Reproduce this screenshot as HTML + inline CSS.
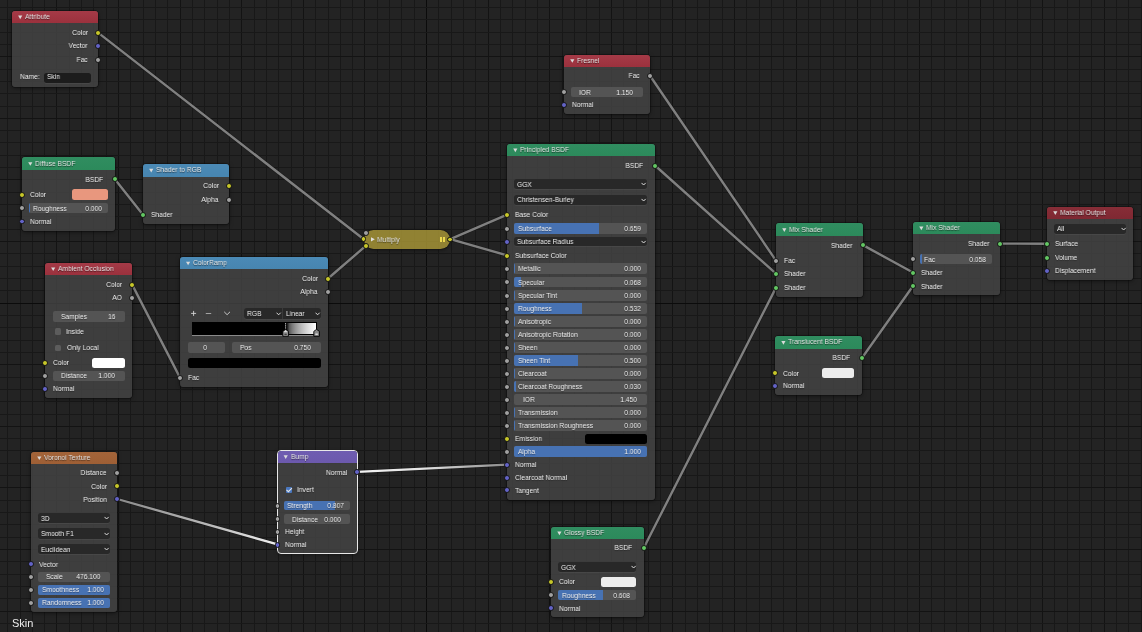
<!DOCTYPE html><html><head><meta charset="utf-8"><style>
html,body{margin:0;padding:0;}
body{width:1142px;height:632px;overflow:hidden;position:relative;background:#232323;font-family:"Liberation Sans",sans-serif;}
.layer{position:absolute;left:0;top:0;}
.node{position:absolute;background:rgba(71,71,71,0.78);border-radius:3px;overflow:hidden;box-shadow:0 0 0 0.6px rgba(10,10,10,0.7),0 1px 4px rgba(0,0,0,0.5);}
.hdr{position:absolute;left:0;top:0;right:0;}
.ht{position:absolute;font-size:7.6px;line-height:12px;color:#e4e4e4;white-space:nowrap;text-shadow:0 0.5px 1px rgba(0,0,0,0.6);}
.t{position:absolute;font-size:7.6px;line-height:12px;color:#efefef;white-space:nowrap;text-shadow:0 0.7px 1px rgba(0,0,0,0.4);}
.L{will-change:transform;transform:scaleX(0.88);transform-origin:0 50%;}
.R{will-change:transform;transform:scaleX(0.88);transform-origin:100% 50%;}
.C{will-change:transform;transform:scaleX(0.88);transform-origin:50% 50%;}
.tri{position:absolute;width:0;height:0;border-left:1.8px solid transparent;border-right:1.8px solid transparent;border-top:3.2px solid #d8d8d8;}
.tri2{position:absolute;width:0;height:0;border-top:1.6px solid transparent;border-bottom:1.6px solid transparent;border-left:2.8px solid #dcdcdc;}
.sk{position:absolute;width:3.9px;height:3.9px;border-radius:50%;border:0.55px solid #161616;}
.fld{position:absolute;background:#545454;border-radius:2px;overflow:hidden;}
.fill{position:absolute;left:0;top:0;bottom:0;background:#4772b3;}
.dd{position:absolute;background:#282828;border-radius:2.5px;box-shadow:0 0.8px 0 rgba(255,255,255,0.07);}
.chev{position:absolute;}
.sw{position:absolute;border-radius:2.5px;}
.cb{position:absolute;width:6.4px;height:6.4px;background:#5c5c5c;border-radius:1.5px;}
.cb.on{background:#4a78c0;border-radius:1px;}
.mul{position:absolute;background:rgba(163,146,53,0.86);border-radius:9.5px;box-shadow:0 0 0 0.8px #141414, 0 1px 4px rgba(0,0,0,0.5);}
</style></head><body><svg class="layer" width="1142" height="632"><rect x="7" y="0" width="1" height="632" fill="#181818"/><rect x="20" y="0" width="1" height="632" fill="#181818"/><rect x="32" y="0" width="1" height="632" fill="#181818"/><rect x="44" y="0" width="1" height="632" fill="#181818"/><rect x="56" y="0" width="1" height="632" fill="#131313"/><rect x="69" y="0" width="1" height="632" fill="#181818"/><rect x="81" y="0" width="1" height="632" fill="#181818"/><rect x="93" y="0" width="1" height="632" fill="#181818"/><rect x="106" y="0" width="1" height="632" fill="#181818"/><rect x="118" y="0" width="1" height="632" fill="#131313"/><rect x="130" y="0" width="1" height="632" fill="#181818"/><rect x="143" y="0" width="1" height="632" fill="#181818"/><rect x="155" y="0" width="1" height="632" fill="#181818"/><rect x="167" y="0" width="1" height="632" fill="#181818"/><rect x="180" y="0" width="1" height="632" fill="#131313"/><rect x="192" y="0" width="1" height="632" fill="#181818"/><rect x="204" y="0" width="1" height="632" fill="#181818"/><rect x="217" y="0" width="1" height="632" fill="#181818"/><rect x="229" y="0" width="1" height="632" fill="#181818"/><rect x="241" y="0" width="1" height="632" fill="#131313"/><rect x="254" y="0" width="1" height="632" fill="#181818"/><rect x="266" y="0" width="1" height="632" fill="#181818"/><rect x="278" y="0" width="1" height="632" fill="#181818"/><rect x="291" y="0" width="1" height="632" fill="#181818"/><rect x="303" y="0" width="1" height="632" fill="#131313"/><rect x="315" y="0" width="1" height="632" fill="#181818"/><rect x="328" y="0" width="1" height="632" fill="#181818"/><rect x="340" y="0" width="1" height="632" fill="#181818"/><rect x="352" y="0" width="1" height="632" fill="#181818"/><rect x="364" y="0" width="1" height="632" fill="#131313"/><rect x="377" y="0" width="1" height="632" fill="#181818"/><rect x="389" y="0" width="1" height="632" fill="#181818"/><rect x="401" y="0" width="1" height="632" fill="#181818"/><rect x="414" y="0" width="1" height="632" fill="#181818"/><rect x="426" y="0" width="1" height="632" fill="#0b0b0b"/><rect x="438" y="0" width="1" height="632" fill="#181818"/><rect x="451" y="0" width="1" height="632" fill="#181818"/><rect x="463" y="0" width="1" height="632" fill="#181818"/><rect x="475" y="0" width="1" height="632" fill="#181818"/><rect x="488" y="0" width="1" height="632" fill="#131313"/><rect x="500" y="0" width="1" height="632" fill="#181818"/><rect x="512" y="0" width="1" height="632" fill="#181818"/><rect x="525" y="0" width="1" height="632" fill="#181818"/><rect x="537" y="0" width="1" height="632" fill="#181818"/><rect x="549" y="0" width="1" height="632" fill="#131313"/><rect x="562" y="0" width="1" height="632" fill="#181818"/><rect x="574" y="0" width="1" height="632" fill="#181818"/><rect x="586" y="0" width="1" height="632" fill="#181818"/><rect x="599" y="0" width="1" height="632" fill="#181818"/><rect x="611" y="0" width="1" height="632" fill="#131313"/><rect x="623" y="0" width="1" height="632" fill="#181818"/><rect x="636" y="0" width="1" height="632" fill="#181818"/><rect x="648" y="0" width="1" height="632" fill="#181818"/><rect x="660" y="0" width="1" height="632" fill="#181818"/><rect x="672" y="0" width="1" height="632" fill="#131313"/><rect x="685" y="0" width="1" height="632" fill="#181818"/><rect x="697" y="0" width="1" height="632" fill="#181818"/><rect x="709" y="0" width="1" height="632" fill="#181818"/><rect x="722" y="0" width="1" height="632" fill="#181818"/><rect x="734" y="0" width="1" height="632" fill="#131313"/><rect x="746" y="0" width="1" height="632" fill="#181818"/><rect x="759" y="0" width="1" height="632" fill="#181818"/><rect x="771" y="0" width="1" height="632" fill="#181818"/><rect x="783" y="0" width="1" height="632" fill="#181818"/><rect x="796" y="0" width="1" height="632" fill="#131313"/><rect x="808" y="0" width="1" height="632" fill="#181818"/><rect x="820" y="0" width="1" height="632" fill="#181818"/><rect x="833" y="0" width="1" height="632" fill="#181818"/><rect x="845" y="0" width="1" height="632" fill="#181818"/><rect x="857" y="0" width="1" height="632" fill="#131313"/><rect x="870" y="0" width="1" height="632" fill="#181818"/><rect x="882" y="0" width="1" height="632" fill="#181818"/><rect x="894" y="0" width="1" height="632" fill="#181818"/><rect x="907" y="0" width="1" height="632" fill="#181818"/><rect x="919" y="0" width="1" height="632" fill="#131313"/><rect x="931" y="0" width="1" height="632" fill="#181818"/><rect x="944" y="0" width="1" height="632" fill="#181818"/><rect x="956" y="0" width="1" height="632" fill="#181818"/><rect x="968" y="0" width="1" height="632" fill="#181818"/><rect x="980" y="0" width="1" height="632" fill="#131313"/><rect x="993" y="0" width="1" height="632" fill="#181818"/><rect x="1005" y="0" width="1" height="632" fill="#181818"/><rect x="1017" y="0" width="1" height="632" fill="#181818"/><rect x="1030" y="0" width="1" height="632" fill="#181818"/><rect x="1042" y="0" width="1" height="632" fill="#131313"/><rect x="1054" y="0" width="1" height="632" fill="#181818"/><rect x="1067" y="0" width="1" height="632" fill="#181818"/><rect x="1079" y="0" width="1" height="632" fill="#181818"/><rect x="1091" y="0" width="1" height="632" fill="#181818"/><rect x="1104" y="0" width="1" height="632" fill="#131313"/><rect x="1116" y="0" width="1" height="632" fill="#181818"/><rect x="1128" y="0" width="1" height="632" fill="#181818"/><rect x="1141" y="0" width="1" height="632" fill="#181818"/><rect x="0" y="7" width="1142" height="1" fill="#181818"/><rect x="0" y="19" width="1142" height="1" fill="#181818"/><rect x="0" y="32" width="1142" height="1" fill="#181818"/><rect x="0" y="44" width="1142" height="1" fill="#181818"/><rect x="0" y="56" width="1142" height="1" fill="#131313"/><rect x="0" y="69" width="1142" height="1" fill="#181818"/><rect x="0" y="81" width="1142" height="1" fill="#181818"/><rect x="0" y="93" width="1142" height="1" fill="#181818"/><rect x="0" y="106" width="1142" height="1" fill="#181818"/><rect x="0" y="118" width="1142" height="1" fill="#131313"/><rect x="0" y="130" width="1142" height="1" fill="#181818"/><rect x="0" y="142" width="1142" height="1" fill="#181818"/><rect x="0" y="155" width="1142" height="1" fill="#181818"/><rect x="0" y="167" width="1142" height="1" fill="#181818"/><rect x="0" y="179" width="1142" height="1" fill="#131313"/><rect x="0" y="192" width="1142" height="1" fill="#181818"/><rect x="0" y="204" width="1142" height="1" fill="#181818"/><rect x="0" y="216" width="1142" height="1" fill="#181818"/><rect x="0" y="229" width="1142" height="1" fill="#181818"/><rect x="0" y="241" width="1142" height="1" fill="#131313"/><rect x="0" y="253" width="1142" height="1" fill="#181818"/><rect x="0" y="266" width="1142" height="1" fill="#181818"/><rect x="0" y="278" width="1142" height="1" fill="#181818"/><rect x="0" y="290" width="1142" height="1" fill="#181818"/><rect x="0" y="303" width="1142" height="1" fill="#0b0b0b"/><rect x="0" y="315" width="1142" height="1" fill="#181818"/><rect x="0" y="327" width="1142" height="1" fill="#181818"/><rect x="0" y="340" width="1142" height="1" fill="#181818"/><rect x="0" y="352" width="1142" height="1" fill="#181818"/><rect x="0" y="364" width="1142" height="1" fill="#131313"/><rect x="0" y="377" width="1142" height="1" fill="#181818"/><rect x="0" y="389" width="1142" height="1" fill="#181818"/><rect x="0" y="401" width="1142" height="1" fill="#181818"/><rect x="0" y="414" width="1142" height="1" fill="#181818"/><rect x="0" y="426" width="1142" height="1" fill="#131313"/><rect x="0" y="438" width="1142" height="1" fill="#181818"/><rect x="0" y="450" width="1142" height="1" fill="#181818"/><rect x="0" y="463" width="1142" height="1" fill="#181818"/><rect x="0" y="475" width="1142" height="1" fill="#181818"/><rect x="0" y="487" width="1142" height="1" fill="#131313"/><rect x="0" y="500" width="1142" height="1" fill="#181818"/><rect x="0" y="512" width="1142" height="1" fill="#181818"/><rect x="0" y="524" width="1142" height="1" fill="#181818"/><rect x="0" y="537" width="1142" height="1" fill="#181818"/><rect x="0" y="549" width="1142" height="1" fill="#131313"/><rect x="0" y="561" width="1142" height="1" fill="#181818"/><rect x="0" y="574" width="1142" height="1" fill="#181818"/><rect x="0" y="586" width="1142" height="1" fill="#181818"/><rect x="0" y="598" width="1142" height="1" fill="#181818"/><rect x="0" y="611" width="1142" height="1" fill="#131313"/><rect x="0" y="623" width="1142" height="1" fill="#181818"/></svg>
<svg class="layer" width="1142" height="632"><line x1="98" y1="32.6" x2="363.5" y2="239" stroke="rgba(0,0,0,0.22)" stroke-width="3.6" stroke-linecap="round"/><line x1="328" y1="278.5" x2="366" y2="245.7" stroke="rgba(0,0,0,0.22)" stroke-width="3.6" stroke-linecap="round"/><line x1="450.3" y1="239.2" x2="507.2" y2="214.6" stroke="rgba(0,0,0,0.22)" stroke-width="3.6" stroke-linecap="round"/><line x1="450.3" y1="239.2" x2="507.2" y2="255.4" stroke="rgba(0,0,0,0.22)" stroke-width="3.6" stroke-linecap="round"/><line x1="114.7" y1="178.9" x2="143" y2="214.7" stroke="rgba(0,0,0,0.22)" stroke-width="3.6" stroke-linecap="round"/><line x1="132" y1="284.4" x2="180" y2="377.6" stroke="rgba(0,0,0,0.22)" stroke-width="3.6" stroke-linecap="round"/><line x1="650" y1="75.7" x2="776" y2="260.6" stroke="rgba(0,0,0,0.22)" stroke-width="3.6" stroke-linecap="round"/><line x1="655" y1="165.5" x2="776" y2="273.7" stroke="rgba(0,0,0,0.22)" stroke-width="3.6" stroke-linecap="round"/><line x1="643.7" y1="548" x2="776" y2="287.6" stroke="rgba(0,0,0,0.22)" stroke-width="3.6" stroke-linecap="round"/><line x1="862.5" y1="244.9" x2="913" y2="272.5" stroke="rgba(0,0,0,0.22)" stroke-width="3.6" stroke-linecap="round"/><line x1="862.1" y1="357.7" x2="913" y2="286" stroke="rgba(0,0,0,0.22)" stroke-width="3.6" stroke-linecap="round"/><line x1="999.7" y1="243.6" x2="1047" y2="243.7" stroke="rgba(0,0,0,0.22)" stroke-width="3.6" stroke-linecap="round"/><line x1="117.3" y1="499" x2="277.5" y2="544.4" stroke="rgba(0,0,0,0.22)" stroke-width="3.6" stroke-linecap="round"/><line x1="357.4" y1="471.9" x2="507.2" y2="464.6" stroke="rgba(0,0,0,0.22)" stroke-width="3.6" stroke-linecap="round"/><line x1="98" y1="32.6" x2="363.5" y2="239" stroke="#808080" stroke-width="2.4" stroke-linecap="round"/><line x1="328" y1="278.5" x2="366" y2="245.7" stroke="#808080" stroke-width="2.4" stroke-linecap="round"/><line x1="450.3" y1="239.2" x2="507.2" y2="214.6" stroke="#808080" stroke-width="2.4" stroke-linecap="round"/><line x1="450.3" y1="239.2" x2="507.2" y2="255.4" stroke="#808080" stroke-width="2.4" stroke-linecap="round"/><line x1="114.7" y1="178.9" x2="143" y2="214.7" stroke="#808080" stroke-width="2.4" stroke-linecap="round"/><line x1="132" y1="284.4" x2="180" y2="377.6" stroke="#808080" stroke-width="2.4" stroke-linecap="round"/><line x1="650" y1="75.7" x2="776" y2="260.6" stroke="#808080" stroke-width="2.4" stroke-linecap="round"/><line x1="655" y1="165.5" x2="776" y2="273.7" stroke="#808080" stroke-width="2.4" stroke-linecap="round"/><line x1="643.7" y1="548" x2="776" y2="287.6" stroke="#808080" stroke-width="2.4" stroke-linecap="round"/><line x1="862.5" y1="244.9" x2="913" y2="272.5" stroke="#808080" stroke-width="2.4" stroke-linecap="round"/><line x1="862.1" y1="357.7" x2="913" y2="286" stroke="#808080" stroke-width="2.4" stroke-linecap="round"/><line x1="999.7" y1="243.6" x2="1047" y2="243.7" stroke="#808080" stroke-width="2.4" stroke-linecap="round"/><defs><linearGradient id="g1" gradientUnits="userSpaceOnUse" x1="117.3" y1="499" x2="277.5" y2="544.4"><stop offset="0" stop-color="#8a8a8a"/><stop offset="0.6" stop-color="#bcbcbc"/><stop offset="1" stop-color="#f2f2f2"/></linearGradient></defs><line x1="117.3" y1="499" x2="277.5" y2="544.4" stroke="url(#g1)" stroke-width="2.3" stroke-linecap="round"/><defs><linearGradient id="g2" gradientUnits="userSpaceOnUse" x1="357.4" y1="471.9" x2="507.2" y2="464.6"><stop offset="0" stop-color="#f4f4f4"/><stop offset="0.45" stop-color="#e2e2e2"/><stop offset="1" stop-color="#8a8a8a"/></linearGradient></defs><line x1="357.4" y1="471.9" x2="507.2" y2="464.6" stroke="url(#g2)" stroke-width="2.3" stroke-linecap="round"/></svg>
<div class="node" style="left:12px;top:11px;width:86px;height:76.1px;"><div class="hdr" style="height:12px;background:linear-gradient(#a53a47,#9b313d)"></div></div>
<svg class="layer" width="1142" height="632"><path d="M18.1 15.5 H22.3 L20.2 19.2 Z" fill="#dadada"/></svg>
<div class="ht L" style="left:25.1px;top:11px">Attribute</div>
<div class="t R" style="right:1054.2px;top:27.2px;">Color</div>
<div class="sk" style="left:95.05px;top:29.95px;background:#c7c729"></div>
<div class="t R" style="right:1054.2px;top:40.4px;">Vector</div>
<div class="sk" style="left:95.05px;top:43.15px;background:#6363c7"></div>
<div class="t R" style="right:1054.2px;top:54px;">Fac</div>
<div class="sk" style="left:95.05px;top:56.75px;background:#a1a1a1"></div>
<div class="t L" style="left:20px;top:71.3px;">Name:</div>
<div class="dd" style="left:44.2px;top:73px;width:46.8px;height:10px;background:#1c1c1c"></div>
<div class="t L" style="left:46.6px;top:71.3px;">Skin</div>
<div class="node" style="left:22.1px;top:157.4px;width:92.6px;height:73.5px;"><div class="hdr" style="height:12.5px;background:linear-gradient(#308d60,#2c8a5b)"></div></div>
<svg class="layer" width="1142" height="632"><path d="M28.2 162.15 H32.4 L30.3 165.85 Z" fill="#dadada"/></svg>
<div class="ht L" style="left:35.2px;top:157.65px">Diffuse BSDF</div>
<div class="t R" style="right:1038.4px;top:173.5px;">BSDF</div>
<div class="sk" style="left:111.75px;top:176.25px;background:#63c763"></div>
<div class="t L" style="left:29.5px;top:189.2px;">Color</div>
<div class="sk" style="left:19.15px;top:191.95px;background:#c7c729"></div>
<div class="sw" style="left:72px;top:189.2px;width:36px;height:10.9px;background:#e8977e"></div>
<div class="sk" style="left:19.15px;top:205.05px;background:#a1a1a1"></div>
<div class="fld" style="left:29px;top:203px;width:79px;height:10px"><div class="fill" style="width:1.3px"></div></div>
<div class="t L" style="left:33px;top:202.6px;">Roughness</div>
<div class="t R" style="right:1039.5px;top:202.6px;">0.000</div>
<div class="t L" style="left:29.5px;top:215.8px;">Normal</div>
<div class="sk" style="left:19.15px;top:218.55px;background:#6363c7"></div>
<div class="node" style="left:143px;top:163.9px;width:86px;height:59.9px;"><div class="hdr" style="height:12.8px;background:linear-gradient(#4b8ab6,#4785b0)"></div></div>
<svg class="layer" width="1142" height="632"><path d="M149.1 168.8 H153.3 L151.2 172.5 Z" fill="#dadada"/></svg>
<div class="ht L" style="left:156.1px;top:164.3px">Shader to RGB</div>
<div class="t R" style="right:923.2px;top:180.3px;">Color</div>
<div class="sk" style="left:226.05px;top:183.05px;background:#c7c729"></div>
<div class="t R" style="right:923.2px;top:193.9px;">Alpha</div>
<div class="sk" style="left:226.05px;top:196.65px;background:#a1a1a1"></div>
<div class="t L" style="left:150.5px;top:209.3px;">Shader</div>
<div class="sk" style="left:140.05px;top:212.05px;background:#63c763"></div>
<div class="node" style="left:45px;top:262.6px;width:87px;height:135.1px;"><div class="hdr" style="height:12.6px;background:linear-gradient(#a53a47,#9b313d)"></div></div>
<svg class="layer" width="1142" height="632"><path d="M51.1 267.4 H55.3 L53.2 271.1 Z" fill="#dadada"/></svg>
<div class="ht L" style="left:58.1px;top:262.9px">Ambient Occlusion</div>
<div class="t R" style="right:1020.2px;top:279px;">Color</div>
<div class="sk" style="left:129.05px;top:281.75px;background:#c7c729"></div>
<div class="t R" style="right:1020.2px;top:292.3px;">AO</div>
<div class="sk" style="left:129.05px;top:295.05px;background:#a1a1a1"></div>
<div class="fld" style="left:53px;top:311.2px;width:72px;height:11px"></div>
<div class="t L" style="left:60.5px;top:311.3px;">Samples</div>
<div class="t R" style="right:1026.8px;top:311.3px;">16</div>
<div class="cb" style="left:55px;top:328.3px"></div>
<div class="t L" style="left:65.5px;top:326px;">Inside</div>
<div class="cb" style="left:55px;top:344.6px"></div>
<div class="t L" style="left:66.5px;top:342.3px;">Only Local</div>
<div class="t L" style="left:52.5px;top:356.9px;">Color</div>
<div class="sk" style="left:42.05px;top:359.65px;background:#c7c729"></div>
<div class="sw" style="left:92px;top:358.2px;width:33px;height:9.8px;background:#ffffff"></div>
<div class="sk" style="left:42.05px;top:372.75px;background:#a1a1a1"></div>
<div class="fld" style="left:53px;top:370.8px;width:72px;height:9.9px"></div>
<div class="t L" style="left:61px;top:370.35px;">Distance</div>
<div class="t R" style="right:1027px;top:370.35px;">1.000</div>
<div class="t L" style="left:52.5px;top:383.1px;">Normal</div>
<div class="sk" style="left:42.05px;top:385.85px;background:#6363c7"></div>
<div class="node" style="left:179.9px;top:257.2px;width:148.1px;height:129.8px;"><div class="hdr" style="height:11.9px;background:linear-gradient(#4b8ab6,#4785b0)"></div></div>
<svg class="layer" width="1142" height="632"><path d="M186 261.65 H190.2 L188.1 265.35 Z" fill="#dadada"/></svg>
<div class="ht L" style="left:193px;top:257.15px">ColorRamp</div>
<div class="t R" style="right:824.2px;top:273.1px;">Color</div>
<div class="sk" style="left:325.05px;top:275.85px;background:#c7c729"></div>
<div class="t R" style="right:824.2px;top:286.4px;">Alpha</div>
<div class="sk" style="left:325.05px;top:289.15px;background:#a1a1a1"></div>
<svg class="layer" style="left:0;top:0" width="1142" height="632"><path d="M191.1 313.4 H196.1 M193.6 310.9 V315.9" stroke="#d6d6d6" stroke-width="0.9"/><path d="M205.8 313.5 H211.2" stroke="#bdbdbd" stroke-width="0.8"/><path d="M224.2 311.8 L227.1 314.7 L230 311.8" fill="none" stroke="#d6d6d6" stroke-width="0.9"/></svg>
<div class="dd" style="left:244px;top:308px;width:77px;height:11px;border-radius:3px"></div>
<div style="position:absolute;left:282.3px;top:308px;width:0.6px;height:11px;background:#3a3a3a"></div>
<div class="t L" style="left:247px;top:308.1px;">RGB</div>
<div class="t L" style="left:286.2px;top:308.1px;">Linear</div>
<svg class="chev" style="left:276.4px;top:311.9px" width="6" height="4"><path d="M0.5 0.7 L2.6 2.8 L4.7 0.7" fill="none" stroke="#dcdcdc" stroke-width="1"/></svg>
<svg class="chev" style="left:315px;top:311.9px" width="6" height="4"><path d="M0.5 0.7 L2.6 2.8 L4.7 0.7" fill="none" stroke="#dcdcdc" stroke-width="1"/></svg>
<div style="position:absolute;left:191.9px;top:322.1px;width:124.8px;height:12.9px;background:#000"></div>
<div style="position:absolute;left:192.9px;top:323px;width:123px;height:11px;background:linear-gradient(90deg,#000 0%,#000 75.93%,rgb(90,90,90) 78.34%,rgb(123,123,123) 80.75%,rgb(148,148,148) 83.15%,rgb(168,168,168) 85.56%,rgb(186,186,186) 87.97%,rgb(202,202,202) 90.37%,rgb(217,217,217) 92.78%,rgb(230,230,230) 95.19%,rgb(243,243,243) 97.59%,rgb(255,255,255) 100.00%)"></div>
<div style="position:absolute;left:191.9px;top:335.1px;width:124.8px;height:0.9px;background:#8a8a8a"></div>
<svg class="layer" width="1142" height="632"><path d="M285.6 323.2 V328.6" stroke="#fff" stroke-width="0.9" stroke-dasharray="1.2 0.9"/><path d="M282.8 336.3 V331.4 L285.6 329.3 L288.4 331.4 V336.3 Z" fill="#9c9c9c" stroke="#000" stroke-width="0.9"/><path d="M283.6 331.7 L285.6 330.2 L287.6 331.7 Z" fill="#f0f0f0"/><rect x="284.4" y="333.7" width="2.4" height="1.1" fill="#2a2a2a"/><path d="M313.8 336.3 V331.4 L316.6 329.3 L319.4 331.4 V336.3 Z" fill="#8a8a8a" stroke="#000" stroke-width="0.9"/><rect x="315.4" y="333.6" width="2.4" height="1.2" fill="#f0f0f0"/></svg>
<div class="fld" style="left:188px;top:342.1px;width:36.9px;height:10.8px"></div>
<div class="t C" style="left:155.2px;width:100px;text-align:center;top:342.1px;">0</div>
<div class="fld" style="left:231.9px;top:342.1px;width:89.1px;height:10.8px"></div>
<div class="t L" style="left:239.5px;top:342.1px;">Pos</div>
<div class="t R" style="right:831px;top:342.1px;">0.750</div>
<div class="sw" style="left:188px;top:358.3px;width:133px;height:9.7px;background:#000000"></div>
<div class="t L" style="left:187.5px;top:372.2px;">Fac</div>
<div class="sk" style="left:176.95px;top:374.95px;background:#a1a1a1"></div>
<div class="node" style="left:31.1px;top:452px;width:86.2px;height:159.7px;"><div class="hdr" style="height:11.8px;background:linear-gradient(#a36439,#9e5f35)"></div></div>
<svg class="layer" width="1142" height="632"><path d="M37.2 456.4 H41.4 L39.3 460.1 Z" fill="#dadada"/></svg>
<div class="ht L" style="left:44.2px;top:451.9px">Voronoi Texture</div>
<div class="t R" style="right:1035px;top:467.2px;">Distance</div>
<div class="sk" style="left:114.35px;top:469.95px;background:#a1a1a1"></div>
<div class="t R" style="right:1035px;top:480.5px;">Color</div>
<div class="sk" style="left:114.35px;top:483.25px;background:#c7c729"></div>
<div class="t R" style="right:1035px;top:493.6px;">Position</div>
<div class="sk" style="left:114.35px;top:496.35px;background:#6363c7"></div>
<div class="dd" style="left:38.2px;top:513px;width:71.6px;height:10px"></div>
<div class="t L" style="left:41.2px;top:512.6px;">3D</div>
<svg class="chev" style="left:104.4px;top:516px" width="6" height="4"><path d="M0.5 0.9 L2.6 3 L4.7 0.9" fill="none" stroke="#dcdcdc" stroke-width="1"/></svg>
<div class="dd" style="left:38.2px;top:528.3px;width:71.6px;height:10.5px"></div>
<div class="t L" style="left:41.2px;top:528.15px;">Smooth F1</div>
<svg class="chev" style="left:104.4px;top:531.55px" width="6" height="4"><path d="M0.5 0.9 L2.6 3 L4.7 0.9" fill="none" stroke="#dcdcdc" stroke-width="1"/></svg>
<div class="dd" style="left:38.2px;top:544px;width:71.6px;height:9.8px"></div>
<div class="t L" style="left:41.2px;top:543.5px;">Euclidean</div>
<svg class="chev" style="left:104.4px;top:546.9px" width="6" height="4"><path d="M0.5 0.9 L2.6 3 L4.7 0.9" fill="none" stroke="#dcdcdc" stroke-width="1"/></svg>
<div class="t L" style="left:38.8px;top:558.5px;">Vector</div>
<div class="sk" style="left:28.15px;top:561.25px;background:#6363c7"></div>
<div class="sk" style="left:28.15px;top:574.15px;background:#a1a1a1"></div>
<div class="fld" style="left:38.3px;top:571.9px;width:71.7px;height:9.8px"></div>
<div class="t L" style="left:46px;top:571.4px;">Scale</div>
<div class="t R" style="right:1042px;top:571.4px;">476.100</div>
<div class="sk" style="left:28.15px;top:587.15px;background:#a1a1a1"></div>
<div class="fld" style="left:38.3px;top:585px;width:71.7px;height:9.7px"><div class="fill" style="width:71.7px"></div></div>
<div class="t L" style="left:41.5px;top:584.45px;">Smoothness</div>
<div class="t R" style="right:1037.5px;top:584.45px;">1.000</div>
<div class="sk" style="left:28.15px;top:600.15px;background:#a1a1a1"></div>
<div class="fld" style="left:38.3px;top:597.9px;width:71.7px;height:9.8px"><div class="fill" style="width:71.7px"></div></div>
<div class="t L" style="left:41.5px;top:597.4px;">Randomness</div>
<div class="t R" style="right:1037.5px;top:597.4px;">1.000</div>
<div class="node" style="left:277.5px;top:450.6px;width:79.5px;height:102.9px;outline:1px solid #e8e8e8;outline-offset:0px;"><div class="hdr" style="height:12.3px;background:linear-gradient(#6f5db1,#6c59ad)"></div></div>
<svg class="layer" width="1142" height="632"><path d="M283.6 455.25 H287.8 L285.7 458.95 Z" fill="#dadada"/></svg>
<div class="ht L" style="left:290.6px;top:450.75px">Bump</div>
<div class="t R" style="right:795px;top:466.5px;">Normal</div>
<div class="sk" style="left:354.05px;top:469.25px;background:#6363c7"></div>
<div class="cb on" style="left:285.8px;top:486.5px"><svg width="7" height="7" style="position:absolute;left:0;top:0;overflow:visible"><path d="M0.5 2.9 L2.4 4.7 L5.9 1.2" fill="none" stroke="#e6e6e6" stroke-width="1.05"/></svg></div>
<div class="t L" style="left:296.5px;top:484.2px;">Invert</div>
<div class="sk" style="left:274.55px;top:503.15px;background:#a1a1a1"></div>
<div class="fld" style="left:284.1px;top:501.2px;width:65.9px;height:9.2px"><div class="fill" style="width:51.18px"></div></div>
<div class="t L" style="left:287.1px;top:500.4px;">Strength</div>
<div class="t R" style="right:797.5px;top:500.4px;">0.807</div>
<div class="sk" style="left:274.55px;top:516.25px;background:#a1a1a1"></div>
<div class="fld" style="left:284.1px;top:514px;width:65.9px;height:9.8px"></div>
<div class="t L" style="left:291.5px;top:513.5px;">Distance</div>
<div class="t R" style="right:801.2px;top:513.5px;">0.000</div>
<div class="t L" style="left:285px;top:526.1px;">Height</div>
<div class="sk" style="left:274.55px;top:528.85px;background:#a1a1a1"></div>
<div class="t L" style="left:285px;top:539px;">Normal</div>
<div class="sk" style="left:274.55px;top:541.75px;background:#6363c7"></div>
<div class="mul" style="left:363.7px;top:229.8px;width:86.6px;height:19px"></div>
<svg class="layer" width="1142" height="632"><path d="M371 237.2 L374.8 239.3 L371 241.4 Z" fill="#dedede"/></svg>
<div class="ht L" style="left:377px;top:233.9px;">Multiply</div>
<div style="position:absolute;left:440.1px;top:237px;width:1.7px;height:4.6px;background:#ecd84e"></div>
<div style="position:absolute;left:442.9px;top:237px;width:1.7px;height:4.6px;background:#ecd84e"></div>
<div class="sk" style="left:363.05px;top:230.15px;background:#a1a1a1"></div>
<div class="sk" style="left:360.55px;top:236.35px;background:#c7c729"></div>
<div class="sk" style="left:363.05px;top:243.05px;background:#c7c729"></div>
<div class="sk" style="left:447.35px;top:236.55px;background:#c7c729"></div>
<div class="node" style="left:564.1px;top:54.5px;width:86px;height:59.8px;"><div class="hdr" style="height:12.3px;background:linear-gradient(#a53a47,#9b313d)"></div></div>
<svg class="layer" width="1142" height="632"><path d="M570.2 59.15 H574.4 L572.3 62.85 Z" fill="#dadada"/></svg>
<div class="ht L" style="left:577.2px;top:54.65px">Fresnel</div>
<div class="t R" style="right:502px;top:70.3px;">Fac</div>
<div class="sk" style="left:647.15px;top:73.05px;background:#a1a1a1"></div>
<div class="sk" style="left:561.15px;top:88.85px;background:#a1a1a1"></div>
<div class="fld" style="left:571px;top:87px;width:72px;height:10px"></div>
<div class="t L" style="left:579px;top:86.6px;">IOR</div>
<div class="t R" style="right:508.5px;top:86.6px;">1.150</div>
<div class="t L" style="left:572px;top:99.3px;">Normal</div>
<div class="sk" style="left:561.15px;top:102.05px;background:#6363c7"></div>
<div class="node" style="left:507.1px;top:143.9px;width:147.9px;height:355.8px;"><div class="hdr" style="height:12.1px;background:linear-gradient(#308d60,#2c8a5b)"></div></div>
<svg class="layer" width="1142" height="632"><path d="M513.2 148.45 H517.4 L515.3 152.15 Z" fill="#dadada"/></svg>
<div class="ht L" style="left:520.2px;top:143.95px">Principled BSDF</div>
<div class="t R" style="right:498.6px;top:160.1px;">BSDF</div>
<div class="sk" style="left:652.05px;top:162.85px;background:#63c763"></div>
<div class="dd" style="left:514.1px;top:179.2px;width:132.7px;height:9.8px"></div>
<div class="t L" style="left:517.1px;top:178.7px;">GGX</div>
<svg class="chev" style="left:641.4px;top:182.1px" width="6" height="4"><path d="M0.5 0.9 L2.6 3 L4.7 0.9" fill="none" stroke="#dcdcdc" stroke-width="1"/></svg>
<div class="dd" style="left:514.1px;top:194.5px;width:132.7px;height:10.2px"></div>
<div class="t L" style="left:517.1px;top:194.2px;">Christensen-Burley</div>
<svg class="chev" style="left:641.4px;top:197.6px" width="6" height="4"><path d="M0.5 0.9 L2.6 3 L4.7 0.9" fill="none" stroke="#dcdcdc" stroke-width="1"/></svg>
<div class="sk" style="left:504.15px;top:211.95px;background:#c7c729"></div>
<div class="t L" style="left:514.5px;top:209.2px;">Base Color</div>
<div class="sk" style="left:504.15px;top:225.95px;background:#a1a1a1"></div>
<div class="fld" style="left:514.1px;top:223.3px;width:132.7px;height:10.6px"><div class="fill" style="width:85.25px"></div></div>
<div class="t L" style="left:518.1px;top:223.2px;">Subsurface</div>
<div class="t R" style="right:500.7px;top:223.2px;">0.659</div>
<div class="sk" style="left:504.15px;top:239.05px;background:#6363c7"></div>
<div class="dd" style="left:514.1px;top:236.9px;width:132.7px;height:9.6px"></div>
<div class="t L" style="left:517.1px;top:236.3px;">Subsurface Radius</div>
<svg class="chev" style="left:641.4px;top:239.7px" width="6" height="4"><path d="M0.5 0.9 L2.6 3 L4.7 0.9" fill="none" stroke="#dcdcdc" stroke-width="1"/></svg>
<div class="sk" style="left:504.15px;top:252.75px;background:#c7c729"></div>
<div class="t L" style="left:514.5px;top:250px;">Subsurface Color</div>
<div class="sk" style="left:504.15px;top:266.05px;background:#a1a1a1"></div>
<div class="fld" style="left:514.1px;top:263.4px;width:132.7px;height:10.6px"><div class="fill" style="width:1.3px"></div></div>
<div class="t L" style="left:518.1px;top:263.3px;">Metallic</div>
<div class="t R" style="right:500.7px;top:263.3px;">0.000</div>
<div class="sk" style="left:504.15px;top:279.45px;background:#a1a1a1"></div>
<div class="fld" style="left:514.1px;top:276.8px;width:132.7px;height:10.6px"><div class="fill" style="width:6.82px"></div></div>
<div class="t L" style="left:518.1px;top:276.7px;">Specular</div>
<div class="t R" style="right:500.7px;top:276.7px;">0.068</div>
<div class="sk" style="left:504.15px;top:292.65px;background:#a1a1a1"></div>
<div class="fld" style="left:514.1px;top:290px;width:132.7px;height:10.6px"><div class="fill" style="width:1.3px"></div></div>
<div class="t L" style="left:518.1px;top:289.9px;">Specular Tint</div>
<div class="t R" style="right:500.7px;top:289.9px;">0.000</div>
<div class="sk" style="left:504.15px;top:305.75px;background:#a1a1a1"></div>
<div class="fld" style="left:514.1px;top:303.1px;width:132.7px;height:10.6px"><div class="fill" style="width:68.4px"></div></div>
<div class="t L" style="left:518.1px;top:303px;">Roughness</div>
<div class="t R" style="right:500.7px;top:303px;">0.532</div>
<div class="sk" style="left:504.15px;top:318.75px;background:#a1a1a1"></div>
<div class="fld" style="left:514.1px;top:316.1px;width:132.7px;height:10.6px"><div class="fill" style="width:1.3px"></div></div>
<div class="t L" style="left:518.1px;top:316px;">Anisotropic</div>
<div class="t R" style="right:500.7px;top:316px;">0.000</div>
<div class="sk" style="left:504.15px;top:331.75px;background:#a1a1a1"></div>
<div class="fld" style="left:514.1px;top:329.1px;width:132.7px;height:10.6px"><div class="fill" style="width:1.3px"></div></div>
<div class="t L" style="left:518.1px;top:329px;">Anisotropic Rotation</div>
<div class="t R" style="right:500.7px;top:329px;">0.000</div>
<div class="sk" style="left:504.15px;top:344.85px;background:#a1a1a1"></div>
<div class="fld" style="left:514.1px;top:342.2px;width:132.7px;height:10.6px"><div class="fill" style="width:1.3px"></div></div>
<div class="t L" style="left:518.1px;top:342.1px;">Sheen</div>
<div class="t R" style="right:500.7px;top:342.1px;">0.000</div>
<div class="sk" style="left:504.15px;top:357.85px;background:#a1a1a1"></div>
<div class="fld" style="left:514.1px;top:355.2px;width:132.7px;height:10.6px"><div class="fill" style="width:64.15px"></div></div>
<div class="t L" style="left:518.1px;top:355.1px;">Sheen Tint</div>
<div class="t R" style="right:500.7px;top:355.1px;">0.500</div>
<div class="sk" style="left:504.15px;top:370.85px;background:#a1a1a1"></div>
<div class="fld" style="left:514.1px;top:368.2px;width:132.7px;height:10.6px"><div class="fill" style="width:1.3px"></div></div>
<div class="t L" style="left:518.1px;top:368.1px;">Clearcoat</div>
<div class="t R" style="right:500.7px;top:368.1px;">0.000</div>
<div class="sk" style="left:504.15px;top:383.75px;background:#a1a1a1"></div>
<div class="fld" style="left:514.1px;top:381.1px;width:132.7px;height:10.6px"><div class="fill" style="width:1.78px"></div></div>
<div class="t L" style="left:518.1px;top:381px;">Clearcoat Roughness</div>
<div class="t R" style="right:500.7px;top:381px;">0.030</div>
<div class="sk" style="left:504.15px;top:396.65px;background:#a1a1a1"></div>
<div class="fld" style="left:514.1px;top:394px;width:132.7px;height:10.6px"></div>
<div class="t L" style="left:522.5px;top:393.9px;">IOR</div>
<div class="t R" style="right:505px;top:393.9px;">1.450</div>
<div class="sk" style="left:504.15px;top:409.85px;background:#a1a1a1"></div>
<div class="fld" style="left:514.1px;top:407.2px;width:132.7px;height:10.6px"><div class="fill" style="width:1.3px"></div></div>
<div class="t L" style="left:518.1px;top:407.1px;">Transmission</div>
<div class="t R" style="right:500.7px;top:407.1px;">0.000</div>
<div class="sk" style="left:504.15px;top:422.85px;background:#a1a1a1"></div>
<div class="fld" style="left:514.1px;top:420.2px;width:132.7px;height:10.6px"><div class="fill" style="width:1.3px"></div></div>
<div class="t L" style="left:518.1px;top:420.1px;">Transmission Roughness</div>
<div class="t R" style="right:500.7px;top:420.1px;">0.000</div>
<div class="sk" style="left:504.15px;top:435.85px;background:#c7c729"></div>
<div class="t L" style="left:514.5px;top:433.1px;">Emission</div>
<div class="sw" style="left:584.5px;top:433.5px;width:62.3px;height:10px;background:#000000"></div>
<div class="sk" style="left:504.15px;top:448.85px;background:#a1a1a1"></div>
<div class="fld" style="left:514.1px;top:446.2px;width:132.7px;height:10.6px"><div class="fill" style="width:132.7px"></div></div>
<div class="t L" style="left:518.1px;top:446.1px;">Alpha</div>
<div class="t R" style="right:500.7px;top:446.1px;">1.000</div>
<div class="sk" style="left:504.15px;top:461.95px;background:#6363c7"></div>
<div class="t L" style="left:514.5px;top:459.2px;">Normal</div>
<div class="sk" style="left:504.15px;top:474.75px;background:#6363c7"></div>
<div class="t L" style="left:514.5px;top:472px;">Clearcoat Normal</div>
<div class="sk" style="left:504.15px;top:487.35px;background:#6363c7"></div>
<div class="t L" style="left:514.5px;top:484.6px;">Tangent</div>
<div class="node" style="left:551.2px;top:527px;width:92.5px;height:89.6px;"><div class="hdr" style="height:12px;background:linear-gradient(#308d60,#2c8a5b)"></div></div>
<svg class="layer" width="1142" height="632"><path d="M557.3 531.5 H561.5 L559.4 535.2 Z" fill="#dadada"/></svg>
<div class="ht L" style="left:564.3px;top:527px">Glossy BSDF</div>
<div class="t R" style="right:510px;top:542.2px;">BSDF</div>
<div class="sk" style="left:640.75px;top:545.35px;background:#63c763"></div>
<div class="dd" style="left:558px;top:562px;width:78px;height:10px"></div>
<div class="t L" style="left:561px;top:561.6px;">GGX</div>
<svg class="chev" style="left:630.6px;top:565px" width="6" height="4"><path d="M0.5 0.9 L2.6 3 L4.7 0.9" fill="none" stroke="#dcdcdc" stroke-width="1"/></svg>
<div class="t L" style="left:559px;top:576.4px;">Color</div>
<div class="sk" style="left:548.25px;top:579.15px;background:#c7c729"></div>
<div class="sw" style="left:600.5px;top:577px;width:35.5px;height:10px;background:#ececec"></div>
<div class="sk" style="left:548.25px;top:592.35px;background:#a1a1a1"></div>
<div class="fld" style="left:558px;top:590px;width:78px;height:10px"><div class="fill" style="width:45.22px"></div></div>
<div class="t L" style="left:562px;top:589.6px;">Roughness</div>
<div class="t R" style="right:511.5px;top:589.6px;">0.608</div>
<div class="t L" style="left:559px;top:602.5px;">Normal</div>
<div class="sk" style="left:548.25px;top:605.25px;background:#6363c7"></div>
<div class="node" style="left:776.1px;top:223.3px;width:86.6px;height:73.6px;"><div class="hdr" style="height:12.8px;background:linear-gradient(#308d60,#2c8a5b)"></div></div>
<svg class="layer" width="1142" height="632"><path d="M782.2 228.2 H786.4 L784.3 231.9 Z" fill="#dadada"/></svg>
<div class="ht L" style="left:789.2px;top:223.7px">Mix Shader</div>
<div class="t R" style="right:289.5px;top:239.5px;">Shader</div>
<div class="sk" style="left:859.75px;top:242.25px;background:#63c763"></div>
<div class="t L" style="left:784px;top:255.2px;">Fac</div>
<div class="sk" style="left:773.15px;top:257.95px;background:#a1a1a1"></div>
<div class="t L" style="left:784px;top:268.3px;">Shader</div>
<div class="sk" style="left:773.15px;top:271.05px;background:#63c763"></div>
<div class="t L" style="left:784px;top:282.2px;">Shader</div>
<div class="sk" style="left:773.15px;top:284.95px;background:#63c763"></div>
<div class="node" style="left:913.1px;top:222px;width:86.6px;height:73.3px;"><div class="hdr" style="height:12.1px;background:linear-gradient(#308d60,#2c8a5b)"></div></div>
<svg class="layer" width="1142" height="632"><path d="M919.2 226.55 H923.4 L921.3 230.25 Z" fill="#dadada"/></svg>
<div class="ht L" style="left:926.2px;top:222.05px">Mix Shader</div>
<div class="t R" style="right:152.5px;top:238.2px;">Shader</div>
<div class="sk" style="left:996.75px;top:240.95px;background:#63c763"></div>
<div class="sk" style="left:910.15px;top:256.05px;background:#a1a1a1"></div>
<div class="fld" style="left:920px;top:254.2px;width:71.9px;height:9.8px"><div class="fill" style="width:1.97px"></div></div>
<div class="t L" style="left:923.5px;top:253.7px;">Fac</div>
<div class="t R" style="right:155.6px;top:253.7px;">0.058</div>
<div class="t L" style="left:921px;top:267.1px;">Shader</div>
<div class="sk" style="left:910.15px;top:269.85px;background:#63c763"></div>
<div class="t L" style="left:921px;top:280.6px;">Shader</div>
<div class="sk" style="left:910.15px;top:283.35px;background:#63c763"></div>
<div class="node" style="left:775.2px;top:336.1px;width:86.9px;height:59.2px;"><div class="hdr" style="height:12.7px;background:linear-gradient(#308d60,#2c8a5b)"></div></div>
<svg class="layer" width="1142" height="632"><path d="M781.3 340.95 H785.5 L783.4 344.65 Z" fill="#dadada"/></svg>
<div class="ht L" style="left:788.3px;top:336.45px">Translucent BSDF</div>
<div class="t R" style="right:291.8px;top:352.3px;">BSDF</div>
<div class="sk" style="left:859.15px;top:355.05px;background:#63c763"></div>
<div class="t L" style="left:783px;top:367.5px;">Color</div>
<div class="sk" style="left:772.25px;top:370.25px;background:#c7c729"></div>
<div class="sw" style="left:821.9px;top:368px;width:31.9px;height:10px;background:#ececec"></div>
<div class="t L" style="left:783px;top:380.3px;">Normal</div>
<div class="sk" style="left:772.25px;top:383.05px;background:#6363c7"></div>
<div class="node" style="left:1047.1px;top:206.8px;width:86.2px;height:73px;"><div class="hdr" style="height:12.1px;background:linear-gradient(#872d37,#7f2832)"></div></div>
<svg class="layer" width="1142" height="632"><path d="M1053.2 211.35 H1057.4 L1055.3 215.05 Z" fill="#dadada"/></svg>
<div class="ht L" style="left:1060.2px;top:206.85px">Material Output</div>
<div class="dd" style="left:1054.2px;top:223.5px;width:72px;height:10.4px"></div>
<div class="t L" style="left:1057.2px;top:223.3px;">All</div>
<svg class="chev" style="left:1120.8px;top:226.7px" width="6" height="4"><path d="M0.5 0.9 L2.6 3 L4.7 0.9" fill="none" stroke="#dcdcdc" stroke-width="1"/></svg>
<div class="t L" style="left:1055px;top:238.3px;">Surface</div>
<div class="sk" style="left:1044.15px;top:241.05px;background:#63c763"></div>
<div class="t L" style="left:1055px;top:252px;">Volume</div>
<div class="sk" style="left:1044.15px;top:254.75px;background:#63c763"></div>
<div class="t L" style="left:1055px;top:265.4px;">Displacement</div>
<div class="sk" style="left:1044.15px;top:268.15px;background:#6363c7"></div>
<div style="position:absolute;left:12px;top:616px;font-size:11px;line-height:14px;color:#eeeeee;white-space:nowrap;will-change:transform">Skin</div></body></html>
